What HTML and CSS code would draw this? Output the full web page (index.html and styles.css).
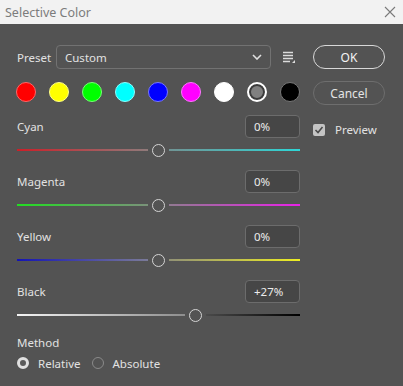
FILE: index.html
```html
<!DOCTYPE html>
<html lang="en">
<head>
  <meta charset="UTF-8" />
  <meta name="viewport" content="width=device-width, initial-scale=1.0" />
  <title>Selective Color</title>
  <link rel="stylesheet" href="styles.css">
</head>
<body>
  <div class="titlebar">
    <span class="title">Selective Color</span>
    <svg class="close" width="12" height="12" viewBox="0 0 12 12">
      <path d="M1 1 L11 11 M11 1 L1 11" stroke="#7a7a7a" stroke-width="1.1" fill="none"/>
    </svg>
  </div>

  <div class="dialog">
    <div class="left">
      <div class="preset-row">
        <span class="preset-label">Preset</span>
        <div class="select">
          <span>Custom</span>
          <svg width="10" height="6" viewBox="0 0 10 6">
            <path d="M1 1 L5 5 L9 1" stroke="#e0e0e0" stroke-width="1.6" fill="none"/>
          </svg>
        </div>
        <svg class="menu-icon" width="14" height="14" viewBox="0 0 14 14">
          <path d="M1 2.5 H11 M1 5.5 H11 M1 8.5 H11 M1 11.5 H8" stroke="#dcdcdc" stroke-width="1.3"/>
          <path d="M10 13 L13 13 L13 10 Z" fill="#dcdcdc"/>
        </svg>
      </div>

      <div class="swatches">
        <span class="swatch red"></span>
        <span class="swatch yellow"></span>
        <span class="swatch green"></span>
        <span class="swatch cyan"></span>
        <span class="swatch blue"></span>
        <span class="swatch magenta"></span>
        <span class="swatch white"></span>
        <span class="swatch neutral"></span>
        <span class="swatch black"></span>
      </div>

      <div class="group">
        <div class="group-head">
          <span>Cyan</span>
          <div class="value">0%</div>
        </div>
        <div class="slider">
          <span class="track cyan-l" style="width: 131px"></span>
          <span class="knob"></span>
          <span class="track cyan-r"></span>
        </div>
      </div>

      <div class="group">
        <div class="group-head">
          <span>Magenta</span>
          <div class="value">0%</div>
        </div>
        <div class="slider">
          <span class="track magenta-l" style="width: 131px"></span>
          <span class="knob"></span>
          <span class="track magenta-r"></span>
        </div>
      </div>

      <div class="group">
        <div class="group-head">
          <span>Yellow</span>
          <div class="value">0%</div>
        </div>
        <div class="slider">
          <span class="track yellow-l" style="width: 131px"></span>
          <span class="knob"></span>
          <span class="track yellow-r"></span>
        </div>
      </div>

      <div class="group">
        <div class="group-head">
          <span>Black</span>
          <div class="value">+27%</div>
        </div>
        <div class="slider">
          <span class="track black-l" style="width: 168px"></span>
          <span class="knob"></span>
          <span class="track black-r"></span>
        </div>
      </div>

      <div class="method">
        <div class="method-label">Method</div>
        <div class="radios">
          <label class="radio"><span class="dot checked"></span>Relative</label>
          <label class="radio"><span class="dot"></span>Absolute</label>
        </div>
      </div>
    </div>

    <div class="right">
      <button class="btn primary">OK</button>
      <button class="btn">Cancel</button>
      <label class="preview">
        <span class="checkbox">
          <svg width="10" height="10" viewBox="0 0 10 10">
            <path d="M1.5 5 L4 7.5 L8.5 2" stroke="#4a4a4a" stroke-width="1.6" fill="none"/>
          </svg>
        </span>
        Preview
      </label>
    </div>
  </div>
</body>
</html>
```

FILE: styles.css
```css
body {
  margin: 0;
  padding: 0;
  background-color: #535353;
  font-family: 'Noto Sans', 'Open Sans', sans-serif;
  font-size: 11.5px;
  color: #e2e2e2;
  height: 386px;
  overflow: hidden;
}

.titlebar {
  height: 24px;
  background-color: #f2f2f2;
  display: flex;
  align-items: center;
  justify-content: space-between;
  padding: 0 7px 0 5px;
}

.title {
  font-size: 12.5px;
  color: #7c7c7c;
}

.dialog {
  display: flex;
  gap: 13px;
  padding: 21px 0 0 17px;
}

.left {
  width: 283px;
}

.right {
  width: 72px;
  display: flex;
  flex-direction: column;
}

/* preset row */
.preset-row {
  display: flex;
  align-items: center;
  height: 24px;
}

.preset-label {
  width: 39px;
}

.select {
  width: 215px;
  height: 24px;
  box-sizing: border-box;
  border: 1px solid #727272;
  border-radius: 4px;
  display: flex;
  align-items: center;
  justify-content: space-between;
  padding: 0 8px 0 8px;
}

.menu-icon {
  margin-left: 11px;
}

/* colour swatches */
.swatches {
  display: flex;
  gap: 13px;
  margin-top: 13px;
  margin-left: -1px;
}

.swatch {
  width: 20px;
  height: 20px;
  border-radius: 50%;
  box-sizing: border-box;
  border: 1px solid transparent;
}

.swatch.red { background: #ff0000; border-color: #ff6666; }
.swatch.yellow { background: #ffff00; border-color: #ffff88; }
.swatch.green { background: #00ff00; border-color: #77ff77; }
.swatch.cyan { background: #00ffff; border-color: #88ffff; }
.swatch.blue { background: #0000ff; border-color: #7777ff; }
.swatch.magenta { background: #ff00ff; border-color: #ff77ff; }
.swatch.white { background: #ffffff; border-color: #ffffff; }
.swatch.black { background: #000000; border-color: #777777; }

.swatch.neutral {
  background: #808080;
  border: 2px solid #ffffff;
  box-shadow: inset 0 0 0 2px #3c3c3c;
}

/* slider groups */
.group {
  margin-top: 13px;
}

.group-head {
  display: flex;
  align-items: center;
  justify-content: space-between;
  height: 23px;
}

.value {
  width: 55px;
  height: 23px;
  box-sizing: border-box;
  background-color: #464646;
  border: 1px solid #6c6c6c;
  border-radius: 4px;
  padding: 0 8px;
  line-height: 21px;
  color: #ececec;
}

.slider {
  display: flex;
  align-items: center;
  height: 14px;
  margin-top: 5px;
}

.track {
  height: 2px;
  display: block;
}

.track:last-child {
  flex: 1;
}

.knob {
  width: 13px;
  height: 13px;
  box-sizing: border-box;
  border: 1.5px solid #d4d4d4;
  border-radius: 50%;
  margin: 0 4px 0 4px;
  flex-shrink: 0;
}

.cyan-l { background: linear-gradient(to right, #cc1f28, #8f7a7a); }
.cyan-r { background: linear-gradient(to right, #709494, #2ed6d6); }
.magenta-l { background: linear-gradient(to right, #22dd22, #7a927a); }
.magenta-r { background: linear-gradient(to right, #927a92, #e822e8); }
.yellow-l { background: linear-gradient(to right, #1414b4, #7a7a98); }
.yellow-r { background: linear-gradient(to right, #929276, #eeee22); }
.black-l { background: linear-gradient(to right, #f4f4f4, #8e8e8e); }
.black-r { background: linear-gradient(to right, #4a4a4a, #000000); }

/* method */
.method {
  margin-top: 13px;
}

.method-label {
  height: 16px;
  line-height: 16px;
}

.radios {
  display: flex;
  gap: 11px;
  margin-top: 4px;
  height: 16px;
  align-items: center;
}

.radio {
  display: flex;
  align-items: center;
  gap: 9px;
}

.dot {
  width: 12px;
  height: 12px;
  box-sizing: border-box;
  border-radius: 50%;
  border: 1px solid #8a8a8a;
}

.dot.checked {
  border: 3.5px solid #e0e0e0;
  background: #5a5a5a;
}

/* buttons */
.btn {
  width: 72px;
  height: 24px;
  border-radius: 12px;
  background: transparent;
  border: 1px solid #6e6e6e;
  color: #e4e4e4;
  font-family: inherit;
  font-size: 12px;
  padding: 0;
  margin-bottom: 12px;
}

.btn.primary {
  border-color: #d8d8d8;
  color: #f4f4f4;
}

.preview {
  display: flex;
  align-items: center;
  gap: 10px;
  margin-top: 5px;
}

.checkbox {
  width: 12px;
  height: 12px;
  border-radius: 2px;
  background-color: #c4c4c4;
  display: flex;
  align-items: center;
  justify-content: center;
}
```
